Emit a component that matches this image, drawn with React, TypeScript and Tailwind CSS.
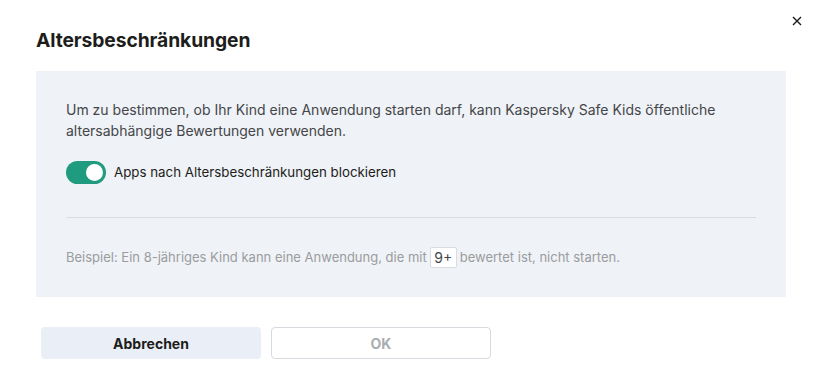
import React from "react";

export default function App() {
  return (
    <div className="relative w-[820px] h-[388px] bg-white" style={{ fontFamily: "Inter, 'Noto Sans', sans-serif" }}>
      <button className="absolute left-[790px] top-[14px] w-[14px] h-[14px] flex items-center justify-center">
        <svg width="10" height="10" viewBox="0 0 10 10" fill="none" stroke="#1a1a1a" strokeWidth="1.4">
          <path d="M1 1 L9 9 M9 1 L1 9" />
        </svg>
      </button>
      <div className="pt-[27px] pl-[36px]">
        <h1 className="text-[19.3px] leading-[26px] font-bold text-[#1d1d1b] tracking-[-0.1px]">Altersbeschränkungen</h1>
      </div>
      <div className="ml-[36px] mt-[18px] w-[750px] h-[226px] bg-[#eff2f6] px-[30px] pt-[28px]">
        <p className="text-[14px] leading-[21px] text-[#444649]">
          Um zu bestimmen, ob Ihr Kind eine Anwendung starten darf, kann Kaspersky Safe Kids öffentliche altersabhängige Bewertungen verwenden.
        </p>
        <div className="flex items-center gap-[8px] mt-[20px]">
          <div className="w-[40px] h-[23px] rounded-full bg-[#1f9c80] flex items-center justify-end pr-[3px]">
            <div className="w-[17px] h-[17px] rounded-full bg-white" />
          </div>
          <span className="text-[13.3px] text-[#1d1d1b]">Apps nach Altersbeschränkungen blockieren</span>
        </div>
        <div className="h-px bg-[#d9dce0] mt-[33px]" />
        <div className="flex items-center mt-[29px] text-[13px] text-[#9b9c9e]">
          <span>Beispiel: Ein 8-jähriges Kind kann eine Anwendung, die mit</span>
          <span className="mx-[3px] h-[21px] w-[27px] justify-center flex items-center bg-white border border-[#d9dce0] rounded-[2px] text-[14px] text-[#444649]">9+</span>
          <span>bewertet ist, nicht starten.</span>
        </div>
      </div>
      <div className="flex gap-[10px] ml-[41px] mt-[30px]">
        <button className="w-[220px] h-[32px] rounded-[4px] bg-[#eaeef6] text-[14px] font-bold text-[#1d1d1b]">Abbrechen</button>
        <button className="w-[220px] h-[32px] rounded-[4px] bg-white border border-[#d6d9de] text-[14px] font-bold text-[#a9acb0]">OK</button>
      </div>
    </div>
  );
}
